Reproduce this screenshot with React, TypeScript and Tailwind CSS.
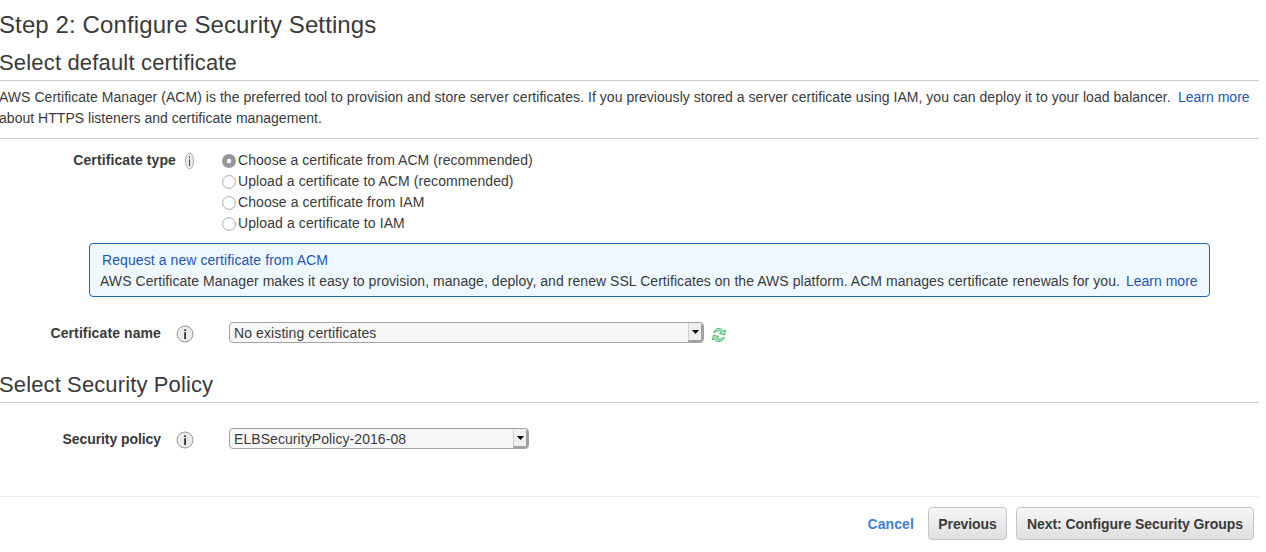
import React from "react";

function InfoIcon({ narrow = false }: { narrow?: boolean }) {
  return (
    <svg
      className={narrow ? "h-[18px] w-[9px] shrink-0" : "h-[18px] w-[18px] shrink-0"}
      viewBox="0 0 18 18"
      preserveAspectRatio="none"
    >
      <circle cx="9" cy="9" r="8" fill="#ececec" stroke="#999" strokeWidth="1" />
      <path d="M8.200 4.300h1.800v1.700H8.200zM8.200 7.200h1.800v6.900H8.200z" fill="#333" />
    </svg>
  );
}

function RefreshIcon() {
  return (
    <svg className="ml-[7px] mt-[5px] h-4 w-4 shrink-0" viewBox="0 0 16 16" fill="#a6e6b8" stroke="#3cae62" strokeWidth="0.8" strokeLinejoin="round">
      <path d="M2.600 5.800C3.600 2.900 5.600 1.400 8 1.400c1.900 0 3.300.9 4.200 2.400l2.600-.5-1.400 4.800-5-1.700 2-1C9.800 4.300 9 3.900 7.900 3.900c-2 0-3.100 1-5.300 1.900z" />
      <path d="M13.400 10.200C12.400 13.100 10.400 14.600 8 14.600c-1.900 0-3.300-.9-4.200-2.400l-2.600.5 1.400-4.800 5 1.700-2 1c.6 1.100 1.400 1.500 2.500 1.500 2 0 3.100-1 5.300-1.900z" />
    </svg>
  );
}

function Select({ className, children }: { className: string; children: React.ReactNode }) {
  return (
    <div className={`flex h-[21px] shrink-0 overflow-hidden rounded-[4px] border border-[#a2a2a2] bg-[#f7f7f7] pl-1 leading-[21px] ${className}`}>
      <span className="flex-1 whitespace-nowrap">{children}</span>
      <span className="flex w-[15px] items-center justify-center border-b-2 border-l border-r-2 border-[#a0a0a0] border-l-[#d0d0d0] bg-[#efefef]">
        <svg className="h-[4px] w-[7px]" viewBox="0 0 7 4">
          <path d="M0 0h7L3.500 4z" fill="#000" />
        </svg>
      </span>
    </div>
  );
}

function Radio({ label, checked = false, className }: { label: string; checked?: boolean; className: string }) {
  return (
    <label className="flex h-[21px] items-center">
      <svg className="mr-[2px] h-[14px] w-[14px] shrink-0" viewBox="0 0 14 14">
        {checked ? (
          <>
            <circle cx="7" cy="7" r="7" fill="#98989b" />
            <circle cx="7" cy="7" r="2.200" fill="#fff" />
          </>
        ) : (
          <circle cx="7" cy="7" r="6.400" fill="#fff" stroke="#aaa" />
        )}
      </svg>
      <span className={`whitespace-nowrap ${className}`}>{label}</span>
    </label>
  );
}

export default function App() {
  return (
    <div className="h-[552px] w-[1266px] overflow-hidden bg-white pr-[7px] font-['Liberation_Sans',Arial,sans-serif] text-[14px] leading-[21px] text-[#3a3a3a]">
      <h1 className="-ml-px h-[45px] whitespace-nowrap pt-[10px] text-[24px] leading-[30px] tracking-[0.11px]">
        Step 2: Configure Security Settings
      </h1>
      <h2 className="h-[36px] whitespace-nowrap border-b border-[#ccc] pt-[3px] text-[22px] leading-[30px] tracking-[0.17px]">
        <span className="-ml-px">Select default certificate</span>
      </h2>
      <div className="h-[58px] whitespace-nowrap border-b border-[#ccc] pt-[6px]">
        <p className="-ml-px flex">
          <span className="w-[1179px] tracking-[0.038px]">AWS Certificate Manager (ACM) is the preferred tool to provision and store server certificates. If you previously stored a server certificate using IAM, you can deploy it to your load balancer.</span>
          <a className="text-[#1c56b5]">Learn more</a>
        </p>
        <p className="-ml-px tracking-[0.03px]">about HTTPS listeners and certificate management.</p>
      </div>
      <div className="flex h-[104px] pt-[11px]">
        <div className="flex h-[21px] w-[222px] shrink-0 items-center">
          <span className="w-[176px] text-right font-bold tracking-[0.1px]">Certificate type</span>
          <span className="ml-[9px] flex"><InfoIcon narrow /></span>
        </div>
        <div>
          <Radio checked className="tracking-[0.05px]" label="Choose a certificate from ACM (recommended)" />
          <Radio className="tracking-[0.08px]" label="Upload a certificate to ACM (recommended)" />
          <Radio className="tracking-[0.07px]" label="Choose a certificate from IAM" />
          <Radio className="tracking-[0.1px]" label="Upload a certificate to IAM" />
        </div>
      </div>
      <div className="ml-[89px] h-[54px] w-[1121px] whitespace-nowrap rounded-[4px] border border-[#1b66b3] bg-[#f0f8ff] pl-[10px] pt-[6px]">
        <p className="pl-[2px]"><a className="tracking-[0.08px] text-[#1c56b5]">Request a new certificate from ACM</a></p>
        <p className="flex">
          <span className="w-[1026px] tracking-[0.055px]">AWS Certificate Manager makes it easy to provision, manage, deploy, and renew SSL Certificates on the AWS platform. ACM manages certificate renewals for you.</span>
          <a className="text-[#1c56b5]">Learn more</a>
        </p>
      </div>
      <div className="flex h-[70px] pt-[25px]">
        <span className="w-[161px] shrink-0 text-right font-bold leading-[23px] tracking-[0.1px]">Certificate name</span>
        <span className="ml-[15px] mr-[35px] mt-[3px]"><InfoIcon /></span>
        <Select className="w-[475px] tracking-[0.1px]">No existing certificates</Select>
        <RefreshIcon />
      </div>
      <h2 className="h-[36px] whitespace-nowrap border-b border-[#ccc] pt-[3px] text-[22px] leading-[30px] tracking-[0.12px]">
        <span className="-ml-px">Select Security Policy</span>
      </h2>
      <div className="flex h-[93px] pt-[25px]">
        <span className="w-[161px] shrink-0 text-right font-bold leading-[23px] tracking-[-0.07px]">Security policy</span>
        <span className="ml-[15px] mr-[35px] mt-[3px]"><InfoIcon /></span>
        <Select className="w-[300px] tracking-[0.07px]">ELBSecurityPolicy-2016-08</Select>
      </div>
      <footer className="flex items-center justify-end border-t border-[#e8e8e8] pr-[5px] pt-[10px] font-bold">
        <a className="mr-[14px] pt-[2px] tracking-[0.1px] text-[#3b82d8]">Cancel</a>
        <button className="mr-[9px] h-[33px] w-[79px] whitespace-nowrap rounded-[4px] border border-[#c5c5c5] bg-linear-to-b from-[#f6f6f6] to-[#dfdfdf] pt-[2px] tracking-[-0.1px]">Previous</button>
        <button className="h-[33px] w-[238px] whitespace-nowrap rounded-[4px] border border-[#c5c5c5] bg-linear-to-b from-[#f6f6f6] to-[#dfdfdf] pt-[2px] tracking-[-0.06px]">Next: Configure Security Groups</button>
      </footer>
    </div>
  );
}
